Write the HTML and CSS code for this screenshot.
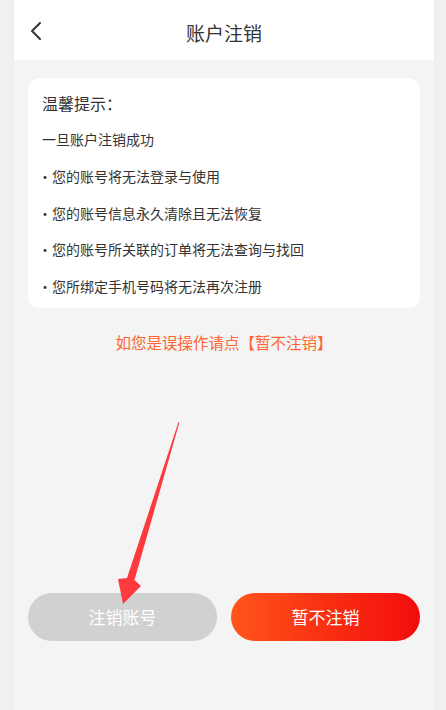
FILE: index.html
```html
<!DOCTYPE html>
<html lang="zh-CN">
<head>
    <meta charset="UTF-8">
    <meta name="viewport" content="width=device-width, initial-scale=1.0">
    <title>账户注销</title>
    <link rel="stylesheet" href="styles.css">
</head>
<body>
    <div class="page">
        <div class="header">
            <svg class="back" width="14" height="20" viewBox="0 0 14 20">
                <polyline points="11,2 3,10 11,18" fill="none" stroke="#333" stroke-width="2" stroke-linecap="round" stroke-linejoin="round"/>
            </svg>
            <h1>账户注销</h1>
        </div>

        <div class="content">
            <div class="card">
                <h2>温馨提示：</h2>
                <p>一旦账户注销成功</p>
                <p><span class="dot">·</span>您的账号将无法登录与使用</p>
                <p><span class="dot">·</span>您的账号信息永久清除且无法恢复</p>
                <p><span class="dot">·</span>您的账号所关联的订单将无法查询与找回</p>
                <p><span class="dot">·</span>您所绑定手机号码将无法再次注册</p>
            </div>
            <p class="hint">如您是误操作请点【暂不注销】</p>
        </div>

        <div class="actions">
            <button class="btn btn-grey">注销账号</button>
            <button class="btn btn-red">暂不注销</button>
        </div>

        <svg class="arrow" width="446" height="710" viewBox="0 0 446 710">
            <polygon points="179.5,422 134.5,580 141,586 123,604 118,579 127,578 178.5,422" fill="#fd3a3d"/>
        </svg>
    </div>
</body>
</html>
```

FILE: styles.css
```css
* {
    margin: 0;
    padding: 0;
    box-sizing: border-box;
}

body {
    font-family: "Noto Sans CJK SC", "Noto Sans", sans-serif;
    background-color: #f0f0f0;
    color: #333;
}

.page {
    position: relative;
    width: 420px;
    height: 710px;
    margin: 0 12px 0 14px;
    background-color: #f4f4f4;
}

.header {
    display: flex;
    align-items: center;
    justify-content: center;
    height: 60px;
    padding-top: 6px;
    background-color: #fff;
    position: relative;
}

.header h1 {
    font-size: 19px;
    font-weight: normal;
    color: #333;
    line-height: 54px;
}

.back {
    position: absolute;
    left: 15px;
    top: 21px;
}

.content {
    padding: 18px 14px 0;
}

.card {
    background-color: #fff;
    border-radius: 12px;
    padding: 7px 14px 3px;
}

.card h2 {
    font-size: 16px;
    font-weight: normal;
    line-height: 36px;
    color: #333;
}

.card p {
    font-size: 14px;
    line-height: 36.75px;
    color: #333;
}

.dot {
    margin-left: -4px;
}

.hint {
    margin-top: 23px;
    text-align: center;
    font-size: 15.5px;
    line-height: 22px;
    color: #ff6633;
}

.actions {
    display: flex;
    gap: 14px;
    padding: 0 14px;
    margin-top: 240px;
}

.btn {
    flex: 1;
    height: 48px;
    border: none;
    border-radius: 24px;
    font-family: inherit;
    font-size: 17px;
    color: #fff;
}

.btn-grey {
    background-color: #d1d1d1;
}

.btn-red {
    background: linear-gradient(to right, #ff551a, #f20c0c);
}

.arrow {
    position: absolute;
    left: -14px;
    top: 0;
    pointer-events: none;
}
```
